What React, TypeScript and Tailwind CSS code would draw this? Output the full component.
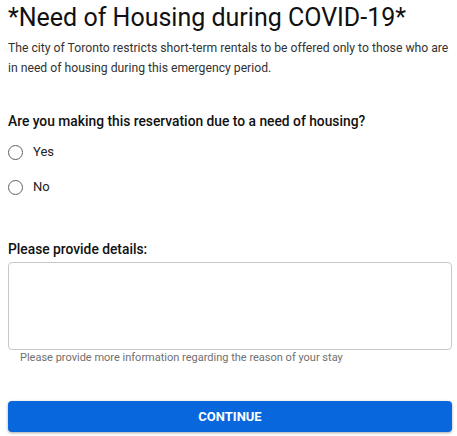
export default function App() {
  return (
    <div className="w-[457px] h-[436px] bg-white pl-2 font-['Roboto',sans-serif] overflow-hidden">
      <div className="w-[444px]">
        <h1 className="pt-[3px] text-[25px] leading-[30px] text-[#111] font-normal whitespace-nowrap">
          *Need of Housing during COVID-19*
        </h1>
        <p className="mt-[5px] text-[12.2px] leading-[20px] text-[#333]">
          The city of Toronto restricts short-term rentals to be offered only to those who are in need of housing during this emergency period.
        </p>

        <h2 className="mt-[33px] text-[13.8px] leading-[20px] font-medium text-[#111]">
          Are you making this reservation due to a need of housing?
        </h2>
        <div className="mt-[11px] flex flex-col gap-[15px]">
          {["Yes", "No"].map((opt) => (
            <label key={opt} className="flex items-center gap-[10px] h-[20px]">
              <span className="w-[15px] h-[15px] rounded-full border-[1.5px] border-[#5b616b] bg-white" />
              <span className="text-[13px] text-[#222]">{opt}</span>
            </label>
          ))}
        </div>

        <h2 className="mt-[42px] text-[13.8px] leading-[20px] font-medium text-[#111]">
          Please provide details:
        </h2>
        <textarea className="mt-[3px] block w-full h-[88px] rounded-[4px] border border-[#c8c8c8] resize-none" />
        <p className="pl-3 text-[11px] leading-[16px] text-[#6f6f6f]">
          Please provide more information regarding the reason of your stay
        </p>

        <button className="mt-[35px] w-full h-[31px] rounded-[4px] bg-[#0867dc] text-white text-[13px] font-bold uppercase shadow-[0_1px_3px_rgba(0,0,0,0.35)]">
          Continue
        </button>
      </div>
    </div>
  );
}
